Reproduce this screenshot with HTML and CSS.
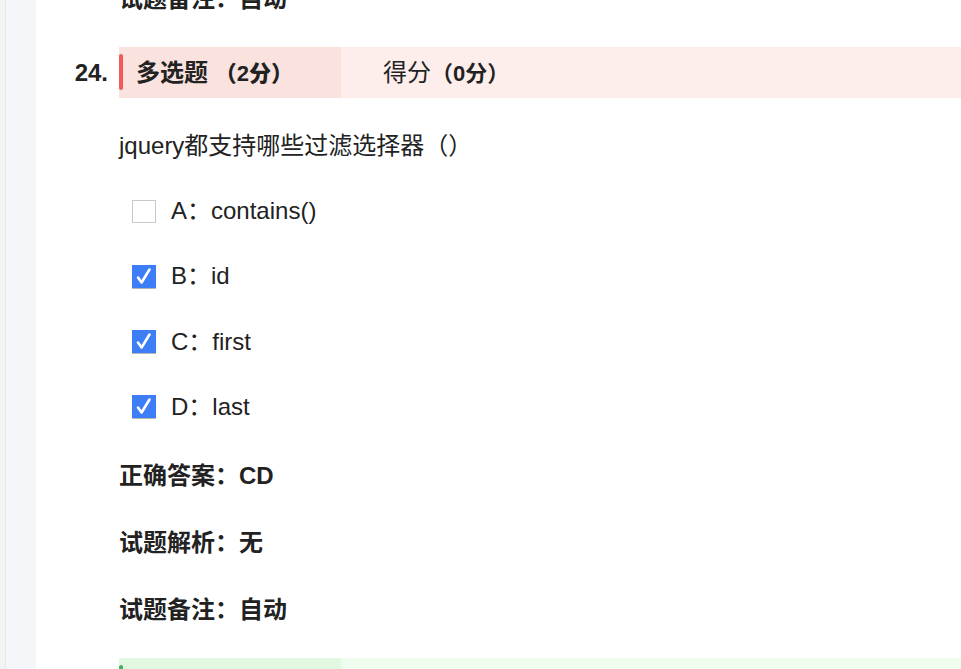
FILE: index.html
```html
<!DOCTYPE html>
<html lang="zh-CN">
  <head>
    <meta charset="UTF-8" />
    <meta name="viewport" content="width=device-width, initial-scale=1.0" />
    <title>考试结果</title>
    <link rel="stylesheet" href="styles.css">
  </head>

  <body>
    <div class="page">
      <div class="sidebar"></div>

      <div class="main">
        <!-- 上一题 (只露出最后一行) -->
        <div class="question prev">
          <div class="q-num"></div>
          <div class="q-body">
            <p class="q-info">试题备注：自动</p>
          </div>
        </div>

        <div class="question">
          <div class="q-num">24.</div>
          <div class="q-body">
            <div class="q-head wrong">
              <div class="q-type">多选题 <b>（2分）</b></div>
              <div class="q-score">得分<b>（0分）</b></div>
            </div>

            <p class="q-title">jquery都支持哪些过滤选择器（）</p>

            <ul class="options">
              <li class="option">
                <span class="box"></span>
                <span class="opt-text">A：contains()</span>
              </li>
              <li class="option">
                <span class="box checked">
                  <svg viewBox="0 0 23 23" width="23" height="23"><path d="M6 12.5 L9.6 17.5 L17.5 4.5" fill="none" stroke="#fff" stroke-width="2.6" stroke-linecap="round" stroke-linejoin="round"/></svg>
                </span>
                <span class="opt-text">B：id</span>
              </li>
              <li class="option">
                <span class="box checked">
                  <svg viewBox="0 0 23 23" width="23" height="23"><path d="M6 12.5 L9.6 17.5 L17.5 4.5" fill="none" stroke="#fff" stroke-width="2.6" stroke-linecap="round" stroke-linejoin="round"/></svg>
                </span>
                <span class="opt-text">C：first</span>
              </li>
              <li class="option">
                <span class="box checked">
                  <svg viewBox="0 0 23 23" width="23" height="23"><path d="M6 12.5 L9.6 17.5 L17.5 4.5" fill="none" stroke="#fff" stroke-width="2.6" stroke-linecap="round" stroke-linejoin="round"/></svg>
                </span>
                <span class="opt-text">D：last</span>
              </li>
            </ul>

            <p class="q-info first">正确答案：CD</p>
            <p class="q-info">试题解析：无</p>
            <p class="q-info">试题备注：自动</p>
          </div>
        </div>

        <div class="question">
          <div class="q-num">25.</div>
          <div class="q-body">
            <div class="q-head right">
              <div class="q-type">多选题 <b>（2分）</b></div>
              <div class="q-score">得分<b>（2分）</b></div>
            </div>
          </div>
        </div>
      </div>
    </div>
  </body>
</html>
```

FILE: styles.css
```css
/* General Reset */
body {
  margin: 0;
  font-family: "Liberation Sans", "Noto Sans CJK SC", sans-serif;
  font-size: 24px;
  color: #222;
  background: #fff;
  height: 100vh;
  overflow: hidden;
}

p,
ul {
  margin: 0;
  padding: 0;
}

.page {
  display: flex;
  min-height: 100vh;
}

/* Left strip */
.sidebar {
  flex: none;
  width: 31px;
  border-left: 5px solid #f3f3f4;
  background: #f5f6fa;
  box-shadow: inset 1px 0 0 #e7e8ea;
}

.main {
  flex: 1;
  margin-top: -16px;
}

/* Question */
.question {
  display: grid;
  grid-template-columns: 83px 1fr;
  padding-bottom: 33px;
}

.q-num {
  padding-right: 11px;
  text-align: right;
  font-weight: bold;
  line-height: 51px;
}

.q-head {
  display: flex;
  height: 51px;
  line-height: 51px;
}

.q-head b {
  font-size: 22px;
}

.q-head.wrong {
  background: #fdeeec;
}

.q-head.right {
  background: #effdef;
}

.q-type {
  position: relative;
  width: 205px;
  padding-left: 17px;
  font-weight: bold;
}

.wrong .q-type {
  background: #fae3de;
}

.right .q-type {
  background: #e1f9e1;
}

.q-type::before {
  content: "";
  position: absolute;
  left: 0;
  top: 7px;
  bottom: 8px;
  width: 4px;
  border-radius: 2px;
}

.wrong .q-type::before {
  background: #f25a57;
}

.right .q-type::before {
  background: #3cb55a;
}

.q-score {
  padding-left: 42px;
}

.q-title {
  margin-top: 33px;
  line-height: 30px;
}

/* Options */
.options {
  list-style: none;
  margin-top: 35px;
  padding-left: 13px;
  display: grid;
  row-gap: 35.3px;
}

.option {
  display: flex;
  align-items: center;
  height: 30px;
}

.box {
  flex: none;
  box-sizing: border-box;
  width: 24px;
  height: 23px;
  margin-right: 15px;
  border: 1px solid #c9c9c9;
  background: #fff;
}

.box.checked {
  border: none;
  background: #3d7ef6;
  box-shadow: 0 1px 0 #b5b5b5;
}

.box svg {
  display: block;
}

.opt-text {
  line-height: 30px;
}

/* Answer info */
.q-info {
  margin-top: 37px;
  line-height: 30px;
  font-weight: bold;
}

.q-info.first {
  margin-top: 39px;
}

.prev .q-info {
  margin-top: 0;
}
```
